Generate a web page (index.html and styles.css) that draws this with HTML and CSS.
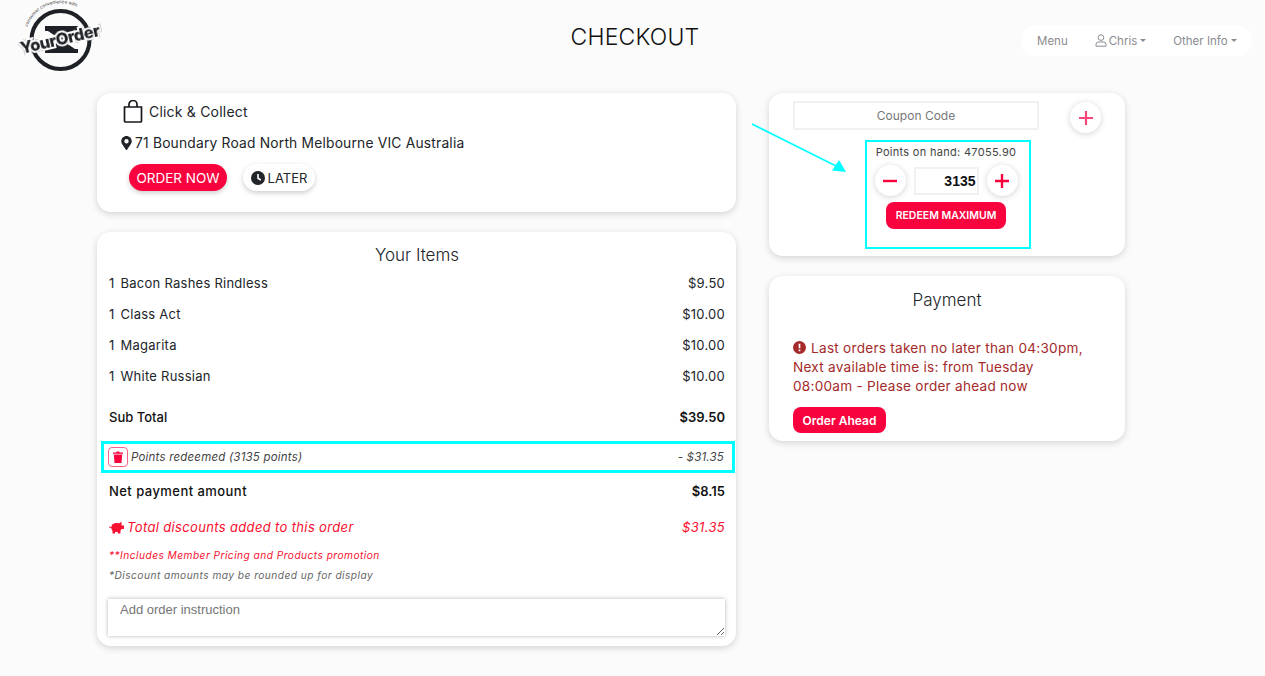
FILE: index.html
```html
<!DOCTYPE html>
<html lang="en">
<head>
<meta charset="utf-8">
<title>Checkout</title>
<link rel="stylesheet" href="styles.css">
</head>
<body>
<header class="topbar">
  <a class="logo" aria-label="YourOrder">
    <svg width="86" height="74" viewBox="0 0 86 74">
      <defs><path id="arc" d="M9.500 27 A 35 35 0 0 1 68 14"/></defs>
      <text class="logo-arc"><textPath href="#arc">consumer convenience with</textPath></text>
      <circle cx="42.500" cy="40" r="29" fill="none" stroke="#1d2126" stroke-width="4"/>
      <rect x="27" y="26" width="33" height="5" fill="#1d2126"/>
      <path d="M30 31H57L43.500 40z" fill="#1d2126"/>
      <path d="M30 49H57L43.500 40z" fill="#1d2126"/>
      <rect x="27" y="49" width="33" height="4" fill="#1d2126"/>
      <text class="logo-word" x="42" y="45" text-anchor="middle" transform="rotate(-13 42 40)">YourOrder</text>
    </svg>
  </a>
  <h1 class="title">CHECKOUT</h1>
  <nav class="nav">
    <span>Menu</span>
    <span class="nav-item">
      <svg width="12" height="13" viewBox="0 0 12 13"><circle cx="6" cy="3.600" r="2.800" fill="none" stroke="#8b8b90"/><path d="M1 12.200v-1.700a2.500 2.500 0 0 1 2.500-2.500h5a2.500 2.500 0 0 1 2.500 2.500v1.700z" fill="none" stroke="#8b8b90"/></svg>
      Chris<i class="caret"></i>
    </span>
    <span class="nav-item">Other Info<i class="caret"></i></span>
  </nav>
</header>

<main class="layout">
  <div class="col">
    <section class="card order-type">
      <div class="collect">
        <svg width="20" height="23" viewBox="0 0 20 23"><path d="M1.500 7h17v14a1 1 0 0 1-1 1h-15a1 1 0 0 1-1-1z M6 7V4.500a4 4 0 0 1 8 0V7" fill="none" stroke="#16181c" stroke-width="1.700"/></svg>
        <span>Click &amp; Collect</span>
      </div>
      <div class="address">
        <svg width="11" height="14" viewBox="0 0 384 512"><path fill="#212529" d="M172 502C27 291 0 265 0 192 0 86 86 0 192 0s192 86 192 192c0 73-27 99-172 310a24 24 0 0 1-40 0zm20-230a80 80 0 1 0 0-160 80 80 0 0 0 0 160z"/></svg>
        <span>71 Boundary Road North Melbourne VIC Australia</span>
      </div>
      <div class="when">
        <button class="pill pill-red">ORDER NOW</button>
        <button class="pill pill-white">
          <svg width="14" height="14" viewBox="0 0 14 14"><circle cx="7" cy="7" r="7" fill="#212529"/><path d="M7 3v4.300l2.800 1.700" fill="none" stroke="#fff" stroke-width="1.600"/></svg>
          LATER
        </button>
      </div>
    </section>

    <section class="card items">
      <h2 class="card-title">Your Items</h2>
      <div class="item-list">
        <div class="row item"><span><b class="qty">1</b>Bacon Rashes Rindless</span><span>$9.50</span></div>
        <div class="row item"><span><b class="qty">1</b>Class Act</span><span>$10.00</span></div>
        <div class="row item"><span><b class="qty">1</b>Magarita</span><span>$10.00</span></div>
        <div class="row item"><span><b class="qty">1</b>White Russian</span><span>$10.00</span></div>
      </div>
      <div class="row subtotal"><span>Sub Total</span><strong>$39.50</strong></div>
      <div class="row redeemed">
        <span class="redeemed-label">
          <i class="trash">
            <svg width="10" height="12" viewBox="0 0 10 12"><path fill="#f9033f" d="M0 1.500h3.200L3.700.500h2.600l.5 1H10v1.300H0zM.8 3.600h8.400L8.500 12h-7z"/></svg>
          </i>
          Points redeemed (3135 points)
        </span>
        <span>- $31.35</span>
      </div>
      <div class="row net"><span>Net payment amount</span><strong>$8.15</strong></div>
      <div class="row discount">
        <span class="discount-label">
          <svg width="15" height="13" viewBox="0 0 15 13"><g fill="#f9102f"><ellipse cx="7.500" cy="6.500" rx="5.300" ry="4.500"/><path d="M9 3L12.500.8V5zM3.500 9h2.600v3.500H3.500zM8.800 9h2.600v3.500H8.800zM11.500 4.500H15V8h-3.500zM0 4.500c.3 1 1 1.500 2.500 1.500v1.200C.8 7.200-.3 6 0 4.500z"/></g></svg>
          Total discounts added to this order
        </span>
        <span>$31.35</span>
      </div>
      <p class="note note-red">**Includes Member Pricing and Products promotion</p>
      <p class="note note-grey">*Discount amounts may be rounded up for display</p>
      <textarea class="instruction" placeholder="Add order instruction"></textarea>
    </section>
  </div>

  <div class="col">
    <section class="card coupon">
      <div class="coupon-row">
        <input class="coupon-input" placeholder="Coupon Code">
        <button class="round round-soft"><svg width="14" height="14" viewBox="0 0 14 14"><path d="M7 0v14M0 7h14" stroke="#f9457a" stroke-width="2.200"/></svg></button>
      </div>
      <div class="points">
        <p class="points-hand">Points on hand: 47055.90</p>
        <div class="stepper">
          <button class="round"><svg width="14" height="14" viewBox="0 0 14 14"><path d="M0 7h14" stroke="#f9033f" stroke-width="2.400"/></svg></button>
          <input class="points-input" value="3135">
          <button class="round"><svg width="14" height="14" viewBox="0 0 14 14"><path d="M7 0v14M0 7h14" stroke="#f9033f" stroke-width="2.400"/></svg></button>
        </div>
        <button class="btn-red btn-max">REDEEM MAXIMUM</button>
      </div>
    </section>

    <section class="card payment">
      <h2 class="card-title">Payment</h2>
      <p class="warning">
        <svg width="13" height="13" viewBox="0 0 13 13"><circle cx="6.500" cy="6.500" r="6.500" fill="#a52a2a"/><path d="M6.500 2.800v4.400M6.500 8.600v1.700" stroke="#fff" stroke-width="1.700"/></svg>
        Last orders taken no later than 04:30pm, Next available time is: from Tuesday 08:00am - Please order ahead now
      </p>
      <button class="btn-red btn-ahead">Order Ahead</button>
    </section>
  </div>
</main>

<svg class="arrow" width="100" height="60" viewBox="0 0 100 60"><path d="M0 1L84 43" stroke="#00ffff" stroke-width="1.600"/><path d="M94 49L80 47.500 87 37z" fill="#00ffff"/></svg>
</body>
</html>
```
FILE: styles.css
```css
* { box-sizing: border-box; }
html, body { margin: 0; height: 100%; overflow: hidden; }
body {
  background: #fbfbfb;
  color: #212529;
  font-family: Inter, "Open Sans", "Liberation Sans", sans-serif;
  font-size: 13px;
  position: relative;
}
button { font-family: inherit; border: 0; cursor: pointer; padding: 0; }
p, h1, h2 { margin: 0; font-weight: 400; }

.topbar {
  height: 93px;
  display: grid;
  grid-template-columns: 1fr auto 1fr;
  align-items: start;
  padding: 0 13px 0 18px;
}
.logo { display: block; height: 74px; }
.logo svg { display: block; }
.logo-arc { font-size: 4.500px; fill: #333; }
.logo-word {
  font-size: 16.500px;
  font-weight: 800;
  letter-spacing: -.4px;
  fill: #1d2126;
  stroke: #fff;
  stroke-width: 4px;
  paint-order: stroke;
  filter: drop-shadow(0 0 .6px #1d2126);
}
.title { font-size: 23px; line-height: 30px; margin-top: 22px; letter-spacing: .2px; font-weight: 300; color: #111; }
.nav {
  justify-self: end;
  margin-top: 25px;
  height: 31px;
  width: 231px;
  border-radius: 16px;
  background: #fff;
  display: flex;
  align-items: center;
  gap: 27px;
  padding-left: 16px;
  color: #8b8b90;
  font-size: 11.500px;
}
.nav-item { display: inline-flex; align-items: center; gap: 2px; }
.caret {
  width: 0; height: 0; margin-left: 1px;
  border: 3px solid transparent;
  border-top-color: #8b8b90;
  border-bottom: 0;
}

.layout {
  display: grid;
  grid-template-columns: 639px 356px;
  column-gap: 33px;
  padding-left: 97px;
}
.col { display: flex; flex-direction: column; gap: 20px; }
.card {
  background: #fff;
  border-radius: 14px;
  box-shadow: 0 2px 7px rgba(0, 0, 0, .16);
}

.order-type { height: 119px; padding: 6px 24px 0; }
.collect { display: flex; align-items: center; gap: 6px; height: 24px; font-size: 14px; letter-spacing: .2px; }
.collect svg { margin-left: 2px; }
.address { display: flex; align-items: center; gap: 3px; margin-top: 10px; height: 20px; font-size: 13.800px; letter-spacing: .2px; }
.when { display: flex; gap: 16px; margin-top: 11px; padding-left: 8px; }
.pill {
  height: 27px;
  border-radius: 14px;
  font-size: 13.500px;
  display: inline-flex;
  align-items: center;
  justify-content: center;
  box-shadow: 0 2px 5px rgba(0, 0, 0, .2);
}
.pill-red { width: 98px; background: #f9033f; color: #fff; }
.pill-white { width: 72px; gap: 3px; background: #fff; color: #212529; font-size: 13px; }

.items { height: 414px; padding: 11px 11px 0 12px; }
.card-title { font-size: 17px; line-height: 24px; text-align: center; color: #212529; font-weight: 300; }
.item-list { padding-top: 1px; }
.row { display: flex; justify-content: space-between; align-items: center; }
.item { height: 30.800px; font-size: 13px; letter-spacing: .25px; }
.qty { font-weight: 400; margin-right: 6px; }
.subtotal { height: 28px; margin-top: 12px; font-size: 13px; font-weight: 500; color: #111; }
.subtotal strong, .net strong { font-weight: 600; }
.redeemed {
  height: 32px;
  margin: 10px -10px 0 -8px;
  padding: 0 8px 0 4px;
  border: 3px solid #00ffff;
  font-size: 11.500px;
  letter-spacing: .2px;
  font-style: italic;
  color: #444;
}
.redeemed-label { display: inline-flex; align-items: center; gap: 3px; }
.trash {
  width: 20px; height: 20px;
  border: 1px solid #f9628a;
  border-radius: 4px;
  display: inline-flex;
  align-items: center;
  justify-content: center;
}
.net { height: 20px; margin-top: 8px; font-size: 13px; font-weight: 500; letter-spacing: .45px; color: #111; }
.net strong { letter-spacing: 0; }
.discount { height: 20px; margin-top: 16px; font-size: 13px; font-style: italic; letter-spacing: .35px; color: #f9102f; }
.discount-label { display: inline-flex; align-items: center; gap: 3px; }
.note { font-size: 10.200px; font-style: italic; line-height: 20px; letter-spacing: .45px; }
.note-red { margin-top: 8px; color: #f9102f; }
.note-grey { color: #666; }
.instruction {
  display: block;
  width: 617px;
  height: 37px;
  margin: 14px 0 0 -1px;
  padding: 3px 12px;
  border: 0;
  outline: 0;
  background: #fff;
  box-shadow: 0 0 4px rgba(0, 0, 0, .3);
  font-family: "Liberation Sans", Arial, sans-serif;
  font-size: 13px;
}
.instruction::placeholder { color: #757575; }

.coupon { height: 163px; padding: 8px 0 0 24px; }
.coupon-row { display: flex; align-items: flex-start; gap: 31px; }
.coupon-input {
  width: 246px; height: 29px;
  border: 2px solid #f1f1f1;
  text-align: center;
  font-family: inherit;
  font-size: 12px;
  background: #fff;
  outline: 0;
}
.coupon-input::placeholder { color: #777; }
.round {
  width: 31px; height: 31px;
  border-radius: 50%;
  background: #fff;
  box-shadow: 0 1px 6px rgba(0, 0, 0, .18);
  display: inline-flex;
  align-items: center;
  justify-content: center;
  flex: none;
}
.round-soft { margin-top: 1px; }
.points {
  width: 166px; height: 109px;
  margin: 7px 0 0 72px;
  border: 2px solid #00ffff;
  display: flex;
  flex-direction: column;
  align-items: center;
  padding: 2px 4px 0 0;
}
.points-hand { font-size: 11px; line-height: 17px; letter-spacing: .3px; color: #444; white-space: nowrap; }
.stepper { display: flex; align-items: center; gap: 8px; margin-top: 4px; }
.points-input {
  width: 65px; height: 28px;
  border: 2px solid #f1f1f1;
  text-align: right;
  padding: 0 1px 0 0;
  font-family: "Liberation Sans", Arial, sans-serif;
  font-size: 14px;
  font-weight: 700;
  color: #111;
  outline: 0;
}
.btn-red {
  background: #f9033f;
  color: #fff;
  border-radius: 8px;
  font-weight: 600;
}
.btn-max { width: 120px; height: 27px; margin-top: 6px; font-size: 10.500px; }

.payment { height: 165px; padding: 12px 24px 0; }
.warning { margin-top: 27px; font-size: 13.600px; line-height: 19px; letter-spacing: .25px; color: #a52a2a; width: 296px; }
.warning svg { vertical-align: -1px; margin-right: 1px; }
.btn-ahead { width: 93px; height: 26px; margin-top: 11px; font-size: 12px; }

.arrow { position: absolute; left: 752px; top: 123px; }
```
